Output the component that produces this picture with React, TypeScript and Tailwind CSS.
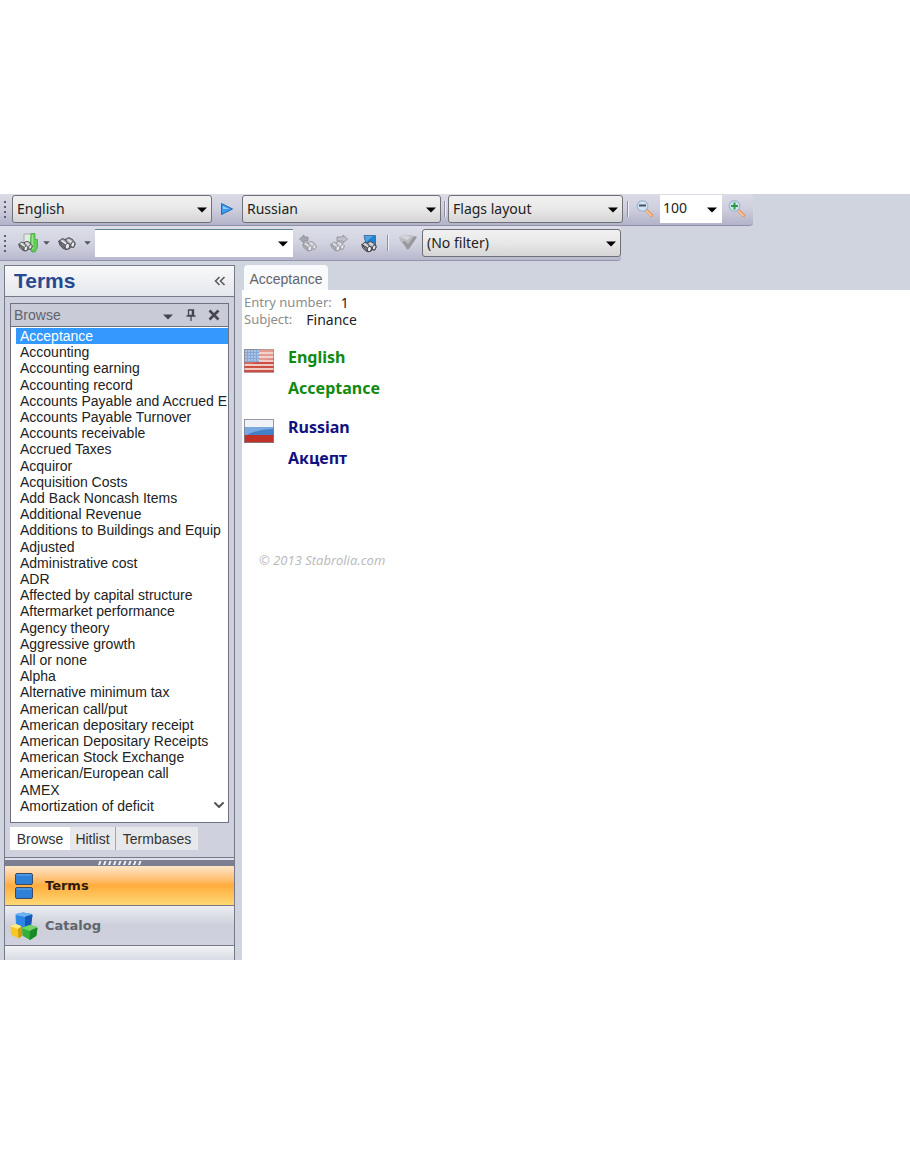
import React, { useState } from 'react';
import { ChevronDown } from 'lucide-react';

const terms = [
  'Acceptance',
  'Accounting',
  'Accounting earning',
  'Accounting record',
  'Accounts Payable and Accrued E',
  'Accounts Payable Turnover',
  'Accounts receivable',
  'Accrued Taxes',
  'Acquiror',
  'Acquisition Costs',
  'Add Back Noncash Items',
  'Additional Revenue',
  'Additions to Buildings and Equip',
  'Adjusted',
  'Administrative cost',
  'ADR',
  'Affected by capital structure',
  'Aftermarket performance',
  'Agency theory',
  'Aggressive growth',
  'All or none',
  'Alpha',
  'Alternative minimum tax',
  'American call/put',
  'American depositary receipt',
  'American Depositary Receipts',
  'American Stock Exchange',
  'American/European call',
  'AMEX',
  'Amortization of deficit',
];

const Caret = ({ className = '' }: { className?: string }) => (
  <svg viewBox="0 0 10 6" className={`w-[10px] h-[6px] ${className}`}>
    <path d="M0 0.5h10L5 5.5z" fill="currentColor" />
  </svg>
);

const Grip = () => (
  <svg viewBox="0 0 3 18" className="w-[3px] h-[18px] shrink-0">
    {[1, 6, 11, 16].map((y) => (
      <rect key={y} x="0" y={y} width="2" height="2" fill="#5c5d75" />
    ))}
  </svg>
);

interface ComboProps {
  label: string;
  value: string;
  className: string;
}

const Combo: React.FC<ComboProps> = ({ label, value, className }) => (
  <div className={`relative shrink-0 ${className}`}>
    <select
      aria-label={label}
      defaultValue={value}
      className="block w-full h-7 pl-1 appearance-none rounded-[3px] border border-[#707078] bg-linear-to-b from-[#f1f1f1] via-[#e8e8e8] to-[#d5d5d7] text-[#222] text-sm"
    >
      <option>{value}</option>
    </select>
    <Caret className="absolute right-[5px] top-3 text-black pointer-events-none" />
  </div>
);

// two slanted barrels, lenses facing the lower right
const Binoculars = ({ color, fill }: { color: string; fill: string }) => (
  <g stroke={color} strokeWidth="1.2" strokeLinejoin="round">
    <path d="M1 7l4-3 4 2 5 4-1 5-4 1z" fill={fill} />
    <path d="M8 5l4-2 4 2 3 5-2 4-4-1z" fill={fill} />
    <path d="M1 7l7 4 1 5-3-1-4-4z" fill={color} fillOpacity="0.4" />
    <ellipse cx="10.5" cy="12.500" rx="2.400" ry="3.300" fill="#ececf1" transform="rotate(20 10.5 12.5)" />
    <ellipse cx="16.500" cy="10.500" rx="2" ry="3.200" fill="#ececf1" transform="rotate(20 16.5 10.5)" />
    <path d="M4 6l5 4M11 5l4 3" fill="none" stroke="#f2f2f5" />
  </g>
);

const FindInsertIcon = () => (
  <svg viewBox="0 0 20 20" className="w-5 h-5">
    <path d="M6 1h8v12H6z" fill="#e4ebe5" stroke="#a3aca6" />
    <path d="M13 0.500h4v6h2.500v8L17 19h-3l-3-4 1-2z" fill="#62cc55" stroke="#43a840" strokeWidth="0.8" />
    <path d="M14.500 2v14" stroke="#98e58a" strokeWidth="1.500" />
    <g transform="translate(0 6) scale(0.75)">
      <Binoculars color="#4d514f" fill="#c3c8c5" />
    </g>
  </svg>
);

const BinocularsIcon = () => (
  <svg viewBox="0 0 20 20" className="w-5 h-5">
    <g transform="translate(1 2) scale(0.9)">
      <Binoculars color="#55555c" fill="#b5b5bb" />
    </g>
  </svg>
);

const FindPreviousIcon = () => (
  <svg viewBox="0 0 20 20" className="w-5 h-5">
    <path d="M1.500 6l4.500-4v2h4v4H6v2z" fill="#a6a6ae" stroke="#8b8b93" strokeWidth="0.8" />
    <g transform="translate(4 6) scale(0.75)">
      <Binoculars color="#9999a2" fill="#c9c9d1" />
    </g>
  </svg>
);

const FindNextIcon = () => (
  <svg viewBox="0 0 20 20" className="w-5 h-5">
    <path d="M18.500 6L14 2v2H8v4h6v2z" fill="#c0c0c8" stroke="#8b8b93" strokeWidth="0.8" />
    <g transform="translate(1 6) scale(0.75)">
      <Binoculars color="#9999a2" fill="#c9c9d1" />
    </g>
  </svg>
);

const FindPageIcon = () => (
  <svg viewBox="0 0 20 20" className="w-5 h-5">
    <path d="M5 2.500h11.500v13H8z" fill="#2380d2" stroke="#3d74ab" />
    <path d="M6 3h8L7 9z" fill="#55a5e5" />
    <g transform="translate(2 6) scale(0.8)">
      <Binoculars color="#45464b" fill="#b3b7bf" />
    </g>
  </svg>
);

const FilterIcon = () => (
  <svg viewBox="0 0 20 20" className="w-5 h-5">
    <path d="M1 4l6-2h6l4 2-1 5-5 4v4H8v-4L2 8z" fill="#bcbcc3" />
    <path d="M2 4l6-1.500 5 1L9 7z" fill="#d5d5db" />
    <path d="M4 9l3-1 3 3 6-8 3 1-8 12H9z" fill="#98989f" />
  </svg>
);

const ZoomIcon = ({ plus = false }: { plus?: boolean }) => (
  <svg viewBox="0 0 20 20" className="w-5 h-5">
    <path d="M11 11l5.500 5.500" stroke="#e09a68" strokeWidth="3.600" strokeLinecap="round" />
    <path d="M11 11.500l5 5" stroke="#f8cba5" strokeWidth="1.500" strokeLinecap="round" />
    <circle cx="7.500" cy="7" r="5.300" fill="#d0e4f3" stroke="#a6bbd0" strokeWidth="1.400" />
    <path
      d={plus ? 'M4 7h7M7.500 3.500v7' : 'M4 6.500h7'}
      stroke={plus ? '#279c45' : '#4c5066'}
      strokeWidth="2"
    />
  </svg>
);

const UsFlag = () => (
  <svg viewBox="0 0 30 24" className="w-[30px] h-6 shrink-0">
    <rect width="30" height="24" fill="#efcbc4" />
    {[0, 4, 8, 12, 16, 20].map((y) => (
      <rect key={y} y={y + 1} width="30" height="2" fill={y > 10 ? '#cc4f45' : '#e08a80'} />
    ))}
    <rect width="15" height="13" fill="#7098cc" />
    {[2, 5, 8, 11].map((y) =>
      [2, 5, 8, 11, 14].map((x) => <circle key={`${x}-${y}`} cx={x} cy={y} r="0.8" fill="#d5e2f3" />)
    )}
    <path d="M0 0h30v9Q14 12 0 17z" fill="#fff" opacity="0.15" />
    <rect x="0.5" y="0.5" width="29" height="23" fill="none" stroke="#9a7478" opacity="0.6" />
  </svg>
);

const RuFlag = () => (
  <svg viewBox="0 0 30 24" className="w-[30px] h-6 shrink-0">
    <rect width="30" height="8" fill="#eff2f6" />
    <rect y="8" width="30" height="8" fill="#4580c6" />
    <rect y="16" width="30" height="8" fill="#c03228" />
    <path d="M0 8h30v2Q14 10 3 16H0z" fill="#7aa9df" />
    <rect x="0.5" y="0.5" width="29" height="23" fill="none" stroke="#7f7f8d" opacity="0.8" />
  </svg>
);

const TermsIcon = () => (
  <svg viewBox="0 0 28 28" className="w-7 h-7">
    <rect x="5.500" y="1.500" width="17" height="11" rx="1.500" fill="#2f80d6" stroke="#3b4a66" />
    <rect x="5.500" y="15.500" width="17" height="11" rx="1.500" fill="#2f80d6" stroke="#3b4a66" />
    <path d="M6.500 3h15M6.500 17h15" stroke="#66a9ea" />
  </svg>
);

const CubesIcon = () => (
  <svg viewBox="0 0 28 28" className="w-7 h-7">
    <g strokeLinejoin="round" strokeWidth="1">
      <path d="M6 2.500l7-1.500 9 1.500-1.500 11-7 2L6.500 13z" fill="#2b86e6" stroke="#2b86e6" />
      <path d="M6 2.500l7-1.500 9 1.500-7 2z" fill="#6fb2f3" stroke="#6fb2f3" />
      <path d="M15.500 5l6.500-2-1.500 10.500-5 1.500z" fill="#1559b8" stroke="#1559b8" />
      <path d="M1 14l5-1.500 5 2 1 9-3 2.500-7.500-3.500z" fill="#f7c821" stroke="#f7c821" />
      <path d="M1 14l5-1.500 5 2-3 2z" fill="#fdec85" stroke="#fdec85" />
      <path d="M8.500 17l3-2 .5 8.500-3 2z" fill="#d39a10" stroke="#d39a10" />
      <path d="M12.500 16l7-2.500 7.500 2-1 8-6 4-7-4z" fill="#35b03a" stroke="#35b03a" />
      <path d="M12.500 16l7-2.500 7.500 2-7 3z" fill="#74d465" stroke="#74d465" />
      <path d="M20.500 19l6.500-3-1 7.500-6 4z" fill="#188a28" stroke="#188a28" />
    </g>
  </svg>
);

const Separator = () => <div className="w-px h-4 shrink-0 bg-[#8d8f9f] border-r border-[#eef0f6] box-content" />;

const Toolbars = () => (
  <div className="flex flex-col items-start font-['Noto_Sans',sans-serif] text-sm">
    <div className="flex items-start h-8 pl-1 pr-1 w-[753px] rounded-r-sm border-b border-[#8e8ea8] bg-linear-to-b from-[#dcdce8] via-[#cdcddc] to-[#b3b3ca]">
      <div className="flex items-center h-[29px]">
        <Grip />
        <Combo label="Source language" value="English" className="w-[200px] ml-[5px]" />
        <button type="button" aria-label="Swap languages" className="w-[30px] shrink-0 flex justify-center">
          <svg viewBox="0 0 14 14" className="w-[14px] h-[14px]">
            <path d="M1.500 1.500l11 5.500-11 5.500z" fill="#3e9ae8" stroke="#1d6cc0" strokeLinejoin="round" />
            <path d="M3 4l6 3H3z" fill="#92cdfa" />
          </svg>
        </button>
        <Combo label="Target language" value="Russian" className="w-[199px] mr-[3px]" />
        <Separator />
        <Combo label="Layout" value="Flags layout" className="w-[175px] ml-[2px] mr-1" />
        <Separator />
        <button type="button" aria-label="Zoom out" className="ml-[6px]">
          <ZoomIcon />
        </button>
        <div className="relative ml-[5px] w-[62px] shrink-0">
          <input
            type="text"
            aria-label="Zoom"
            defaultValue="100"
            className="block w-full h-7 pl-[3px] pb-[2px] bg-white text-[#222] text-sm outline-none"
          />
          <Caret className="absolute right-[5px] top-3 text-black" />
        </div>
        <button type="button" aria-label="Zoom in" className="ml-[5px]">
          <ZoomIcon plus />
        </button>
      </div>
    </div>

    <div className="flex items-center h-[35px] pl-1 w-[621px] rounded-r-sm border-b border-[#9292aa] bg-linear-to-b from-[#dcdee9] via-[#d2d3e0] to-[#b8b8ce]">
      <Grip />
      <button type="button" aria-label="Find and insert" className="ml-[11px]">
        <FindInsertIcon />
      </button>
      <Caret className="scale-75 ml-1 text-[#55565f]" />
      <button type="button" aria-label="Find" className="ml-[6px]">
        <BinocularsIcon />
      </button>
      <Caret className="scale-75 ml-[6px] text-[#55565f]" />
      <div className="relative ml-[3px] w-[198px] shrink-0">
        <input
          type="text"
          aria-label="Search term"
          className="block w-full h-7 pl-1 bg-white border-t border-[#5f8594] text-sm outline-none"
        />
        <Caret className="absolute right-[5px] top-3 text-black" />
      </div>
      <button type="button" aria-label="Previous match" className="ml-[5px]">
        <FindPreviousIcon />
      </button>
      <button type="button" aria-label="Next match" className="ml-[11px]">
        <FindNextIcon />
      </button>
      <button type="button" aria-label="Find in page" className="ml-[10px] mr-2">
        <FindPageIcon />
      </button>
      <Separator />
      <button type="button" aria-label="Filter" className="ml-[9px] mr-1">
        <FilterIcon />
      </button>
      <Combo label="Filter" value="(No filter)" className="w-[199px]" />
    </div>
  </div>
);

const Sidebar = () => {
  const [selected, setSelected] = useState('Acceptance');

  return (
    <aside className="flex flex-col w-[231px] shrink-0 ml-1 border border-b-0 border-[#77798a] bg-[#cfd2de] font-['Liberation_Sans',Arial,sans-serif]">
      <div className="flex items-center justify-between h-[31px] pl-[9px] pr-2 border-b border-[#77798a] bg-linear-to-b from-[#f8f9fa] to-[#e4e7ec]">
        <h2 className="text-[21px] leading-7 font-bold text-[#28498f]">Terms</h2>
        <button type="button" aria-label="Collapse">
          <svg viewBox="0 0 12 10" className="w-3 h-[10px]">
            <path d="M5.500 1L1.500 5l4 4M10.500 1l-4 4 4 4" fill="none" stroke="#55565c" strokeWidth="1.500" />
          </svg>
        </button>
      </div>

      <div className="mx-[5px] mt-[6px] border border-[#6f7180] bg-white">
        <div className="flex items-center h-[23px] pl-[3px] pr-2 border-b border-[#6f7180] bg-[#c9cbd7] text-[#62646c]">
          <span className="text-sm flex-1">Browse</span>
          <button type="button" aria-label="Panel options" className="mr-[13px] pt-1 text-[#45464d]">
            <Caret className="block" />
          </button>
          <button type="button" aria-label="Pin" className="mr-3">
            <svg viewBox="0 0 10 12" className="w-[10px] h-3">
              <path d="M2.500 1h5v5.500h-5zM0.500 7h9M5 7v5" fill="none" stroke="#45464d" strokeWidth="1.300" />
              <path d="M6.500 1v6" stroke="#45464d" strokeWidth="1.500" />
            </svg>
          </button>
          <button type="button" aria-label="Close">
            <svg viewBox="0 0 12 12" className="w-3 h-3">
              <path d="M1.500 1.500l9 9M10.500 1.500l-9 9" stroke="#45464d" strokeWidth="2.600" />
            </svg>
          </button>
        </div>
        <div className="relative pl-[5px] pt-px pb-2">
          <ul className="flex flex-col justify-between h-[486px]">
            {terms.map((term) => (
              <li key={term} className="flex">
                <button
                  type="button"
                  onClick={() => setSelected(term)}
                  className={`w-full h-4 pl-1 text-left text-sm leading-4 whitespace-nowrap overflow-hidden ${
                    term === selected ? 'bg-[#3399ff] text-white' : 'text-[#222]'
                  }`}
                >
                  {term}
                </button>
              </li>
            ))}
          </ul>
          <ChevronDown className="absolute right-[1px] bottom-[9px] w-4 h-4 text-[#55565c]" strokeWidth={3} />
        </div>
      </div>

      <div className="flex h-[23px] mx-[5px] mt-1 text-sm text-[#333]">
        <button type="button" className="w-[60px] bg-white">
          Browse
        </button>
        <button type="button" className="w-[46px] bg-[#e7e8ec] border-r border-[#a2a4b0]">
          Hitlist
        </button>
        <button type="button" className="w-[82px] bg-[#e7e8ec]">
          Termbases
        </button>
      </div>

      <div className="mt-[7px] h-[3px] border-t border-[#77798a] bg-[#dfe2ea]" />
      <div className="flex justify-center items-center h-[6px] bg-[#7c7e92]">
        <svg viewBox="0 0 44 4" className="w-[44px] h-1">
          {[0, 1, 2, 3, 4, 5, 6, 7, 8].map((i) => (
            <path key={i} d={`M${i * 5} 4l1.500 -4h2l-1.500 4z`} fill="#f4f4f8" />
          ))}
        </svg>
      </div>
      <nav className="flex flex-col flex-1 font-['DejaVu_Sans',Verdana,sans-serif] text-[13px] font-bold">
        <button
          type="button"
          className="flex items-center gap-[7px] h-10 pl-[5px] border-b border-[#77798a] bg-linear-to-b from-[#ffe6c8] from-0% via-[#ffad3c] via-50% to-[#ffd873] text-[#2d1a12]"
        >
          <TermsIcon />
          Terms
        </button>
        <button
          type="button"
          className="flex items-center gap-[7px] h-10 pl-[5px] border-b border-[#77798a] bg-linear-to-b from-[#eceef2] via-[#cdd0db] to-[#cfd2de] text-[#62646c]"
        >
          <CubesIcon />
          Catalog
        </button>
        <div className="h-[14px] bg-linear-to-b from-[#f2f3f6] to-[#d8dbe4]" />
      </nav>
    </aside>
  );
};

const Entry = () => (
  <main className="flex flex-col flex-1 min-w-0 ml-[7px]">
    <div className="flex h-[25px] pl-[2px]">
      <button
        type="button"
        className="w-[84px] pt-[2px] rounded-t-sm bg-[#f9fafc] text-[#626469] text-sm font-['Liberation_Sans',Arial,sans-serif]"
      >
        Acceptance
      </button>
    </div>
    <div className="flex-1 pl-[2px] pt-1 bg-white font-['Noto_Sans',Tahoma,sans-serif]">
      <dl className="text-[13px] leading-[17px] text-[#8c8c8c]">
        <div className="flex gap-[9px]">
          <dt>Entry number:</dt>
          <dd className="text-sm leading-[17px] text-[#222]">1</dd>
        </div>
        <div className="flex gap-[14px]">
          <dt>Subject:</dt>
          <dd className="text-sm leading-[17px] text-[#222]">Finance</dd>
        </div>
      </dl>

      <section className="flex gap-[14px] mt-[18px] text-base leading-[31px] font-bold text-[#108a10]">
        <div className="pt-[3px]">
          <UsFlag />
        </div>
        <div className="-mt-1">
          <h3>English</h3>
          <p>Acceptance</p>
        </div>
      </section>
      <section className="flex gap-[14px] mt-3 text-base leading-[31px] font-bold text-[#12127f]">
        <div className="pt-[3px]">
          <RuFlag />
        </div>
        <div className="-mt-1">
          <h3>Russian</h3>
          <p>Акцепт</p>
        </div>
      </section>

      <p className="mt-[76px] ml-[15px] text-[13px] leading-5 italic text-[#bcbcbc]">© 2013 Stabrolia.com</p>
    </div>
  </main>
);

export default function App() {
  return (
    <div className="min-h-screen bg-white py-[194px]">
      <div className="bg-[#d0d4df]">
        <Toolbars />
        <div className="flex pt-1">
          <Sidebar />
          <Entry />
        </div>
      </div>
    </div>
  );
}
